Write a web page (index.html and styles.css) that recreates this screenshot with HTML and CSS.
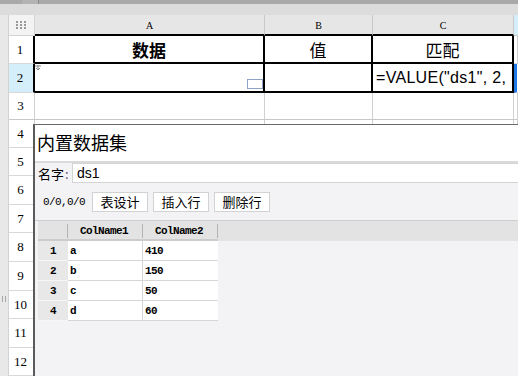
FILE: index.html
```html
<!DOCTYPE html>
<html>
<head>
<meta charset="utf-8">
<link rel="stylesheet" href="styles.css">
</head>
<body>
<div class="app">
  <div class="topbar"><div class="thumb"></div></div>
  <div class="band"></div>
  <div class="sheet">
    <div class="gutter"><span class="grip"></span></div>
    <div class="grid">
      <div class="corner">
        <svg width="10" height="8" viewBox="0 0 10 8"><g fill="#9a9a9a"><rect x="0" y="0" width="2" height="2"/><rect x="4" y="0" width="2" height="2"/><rect x="8" y="0" width="2" height="2"/><rect x="0" y="3" width="2" height="2"/><rect x="4" y="3" width="2" height="2"/><rect x="8" y="3" width="2" height="2"/><rect x="0" y="6" width="2" height="2"/><rect x="4" y="6" width="2" height="2"/><rect x="8" y="6" width="2" height="2"/></g></svg>
      </div>
      <div class="ch blkb">A</div><div class="ch blkb">B</div><div class="ch blkb">C</div><div class="ch sel"></div>

      <div class="rh blkr">1</div>
      <div class="c blk big bold">数据</div><div class="c blk big">值</div><div class="c blk big">匹配</div><div class="c"></div>

      <div class="rh blkr selr">2</div>
      <div class="c blk a2">
        <svg class="mark" width="6" height="6" viewBox="0 0 6 6"><path d="M3 0V5M1 3L3 5L5 3M0 1H6" stroke="#8a8a8a" stroke-width="1" fill="none"/></svg>
        <span class="handle"></span>
      </div>
      <div class="c blk"></div><div class="c blk formula">=VALUE("ds1", 2,</div><div class="c cur"></div>

      <div class="rh r3">3</div><div class="c r3"></div><div class="c r3"></div><div class="c r3"></div><div class="c r3"></div>
      <div class="rh">4</div><div class="c"></div><div class="c"></div><div class="c"></div><div class="c"></div>
      <div class="rh">5</div><div class="c"></div><div class="c"></div><div class="c"></div><div class="c"></div>
      <div class="rh">6</div><div class="c"></div><div class="c"></div><div class="c"></div><div class="c"></div>
      <div class="rh">7</div><div class="c"></div><div class="c"></div><div class="c"></div><div class="c"></div>
      <div class="rh">8</div><div class="c"></div><div class="c"></div><div class="c"></div><div class="c"></div>
      <div class="rh">9</div><div class="c"></div><div class="c"></div><div class="c"></div><div class="c"></div>
      <div class="rh">10</div><div class="c"></div><div class="c"></div><div class="c"></div><div class="c"></div>
      <div class="rh">11</div><div class="c"></div><div class="c"></div><div class="c"></div><div class="c"></div>
      <div class="rh">12</div><div class="c"></div><div class="c"></div><div class="c"></div><div class="c"></div>
    </div>
  </div>

  <div class="dialog">
    <div class="title">内置数据集</div>
    <div class="namerow">
      <span class="label">名字<span class="colon">:</span></span>
      <div class="input">ds1</div>
    </div>
    <div class="toolbar">
      <span class="pos">0/0,0/0</span>
      <button class="btn">表设计</button>
      <button class="btn">插入行</button>
      <button class="btn">删除行</button>
    </div>
    <div class="tablearea">
      <div class="thead">
        <div class="thcols">
          <div class="th"></div>
          <div class="th">ColName1</div>
          <div class="th">ColName2</div>
        </div>
      </div>
      <div class="tbody">
        <div class="num">1</div><div class="td">a</div><div class="td">410</div>
        <div class="num">2</div><div class="td">b</div><div class="td">150</div>
        <div class="num">3</div><div class="td">c</div><div class="td">50</div>
        <div class="num">4</div><div class="td">d</div><div class="td">60</div>
      </div>
    </div>
  </div>
</div>
</body>
</html>
```

FILE: styles.css
```css
* { box-sizing: border-box; }
html, body { margin: 0; padding: 0; }
body {
  width: 518px;
  height: 376px;
  overflow: hidden;
  background: #ffffff;
  font-family: "Noto Sans CJK SC", "Liberation Sans", sans-serif;
  color: #000;
}
.app {
  position: relative;
  width: 518px;
  height: 376px;
  overflow: hidden;
}
.topbar {
  height: 4px;
  background: #a9a9a9;
  display: flex;
}
.thumb {
  margin-left: 22px;
  width: 17px;
  background: #b3b3b3;
  border-right: 1px solid #8a8a8a;
}
.band {
  height: 11px;
  background: #dcdcdc;
}
.sheet {
  display: flex;
  height: 361px;
}
.gutter {
  width: 9px;
  flex: none;
  background: #e8e8e8;
  border-right: 1px solid #d2d2d2;
  padding-top: 281px;
  padding-left: 2px;
}
.grip {
  display: block;
  width: 4px;
  height: 6px;
  border-left: 1px solid #a8a8a8;
  border-right: 1px solid #a8a8a8;
}
.grid {
  flex: 1;
  display: grid;
  grid-template-columns: 26px 230px 108px 141px 1fr;
  grid-template-rows: 21px 28px 29px 27px 28px 28px 29px 28px 29px 29px 28px 29px 28px;
}
.corner {
  background: #f3f3f3;
  border-right: 1px solid #d4d4d4;
  border-bottom: 1px solid #d4d4d4;
  display: flex;
  align-items: center;
  justify-content: center;
  padding-right: 2px;
}
.ch {
  background: #e6e6e6;
  border-right: 1px solid #c9c9c9;
  border-bottom: 1px solid #c9c9c9;
  font-family: "Liberation Serif", serif;
  font-size: 10px;
  display: flex;
  align-items: center;
  justify-content: center;
  padding-top: 1px;
}
.ch.blkb { border-bottom: 2px solid #000; }
.ch.sel { background: #d4eefa; border-right: none; }
.rh {
  background: #fff;
  border-right: 1px solid #d0d0d0;
  border-bottom: 1px solid #d8d8d8;
  font-family: "Liberation Serif", serif;
  font-size: 13px;
  display: flex;
  align-items: center;
  justify-content: center;
  padding-right: 2px;
}
.rh.blkr { border-right: 2px solid #000; }
.rh.selr { background: #d4eefa; }
.c {
  background: #fff;
  border-right: 1px solid #d0d0d0;
  border-bottom: 1px solid #d8d8d8;
  min-width: 0;
  overflow: hidden;
}
.c.blk {
  border-right: 2px solid #000;
  border-bottom: 2px solid #000;
}
.rh.r3, .c.r3 { border-bottom: 1px solid #c8c8c8; }
.big {
  font-size: 17px;
  display: flex;
  align-items: center;
  justify-content: center;
}
.bold { font-weight: 700; }
.a2 {
  display: flex;
  flex-direction: column;
}
.mark {
  display: block;
  margin: 1px 0 0 0;
}
.handle {
  display: block;
  align-self: flex-end;
  margin-top: auto;
  margin-bottom: 2px;
  width: 16px;
  height: 10px;
  border: 1px solid #8fa2c6;
  background: #fff;
}
.formula {
  font-family: "Liberation Sans", sans-serif;
  font-size: 16px;
  letter-spacing: 0.3px;
  white-space: nowrap;
  padding-left: 3px;
  display: flex;
  align-items: center;
}
.cur {
  border-left: 3px solid #1f7ae6;
  border-right: none;
}

/* dialog */
.dialog {
  position: absolute;
  left: 33px;
  top: 124px;
  right: 0;
  bottom: 0;
  border-left: 2px solid #5a5a5a;
  border-top: 1px solid #6a6a6a;
  background: #f3f3f5;
  display: flex;
  flex-direction: column;
}
.title {
  height: 38px;
  flex: none;
  background: #fff;
  border-bottom: 2px solid #dadada;
  font-size: 18px;
  padding-left: 2px;
  display: flex;
  align-items: center;
  padding-bottom: 2px;
}
.namerow {
  height: 20px;
  flex: none;
  display: flex;
  align-items: stretch;
}
.label {
  width: 37px;
  flex: none;
  padding-left: 3px;
  font-size: 13px;
  display: flex;
  align-items: center;
}
.colon { color: #6a4a8a; margin-left: 1px; }
.input {
  flex: 1;
  background: #fff;
  border: 1px solid #d4d4d4;
  border-right: none;
  font-family: "Liberation Sans", sans-serif;
  font-size: 14px;
  padding-left: 4px;
  display: flex;
  align-items: center;
}
.toolbar {
  height: 37px;
  flex: none;
  display: flex;
  align-items: flex-start;
  padding: 9px 0 0 8px;
  gap: 5px;
}
.pos {
  font-family: "Liberation Mono", monospace;
  font-size: 11px;
  letter-spacing: -0.6px;
  height: 20px;
  line-height: 20px;
  margin-right: 2px;
}
.btn {
  height: 20px;
  width: 56px;
  padding: 0;
  margin: 0;
  background: #fff;
  border: 1px solid #d2d2d2;
  font-family: "Noto Sans CJK SC", sans-serif;
  font-size: 13px;
  line-height: 18px;
  color: #000;
}
.tablearea {
  flex: 1;
  border-top: 1px solid #cfcfcf;
  padding-left: 3px;
}
.thead {
  height: 20px;
  background: #e3e3e3;
}
.thcols {
  width: 180px;
  height: 20px;
  display: grid;
  grid-template-columns: 30px 75px 75px;
  border-bottom: 2px solid #cccccc;
  align-items: center;
}
.th {
  height: 14px;
  border-right: 1px solid #b4b4b4;
  font-family: "Liberation Mono", monospace;
  font-size: 11px;
  font-weight: 700;
  letter-spacing: -0.6px;
  line-height: 14px;
  padding-left: 12px;
  margin-top: 1px;
}
.tbody {
  width: 180px;
  display: grid;
  grid-template-columns: 30px 75px 75px;
  grid-auto-rows: 20px;
  border-right: 1px solid #d0d0d0;
}
.num, .td {
  border-bottom: 1px solid #d6d6d6;
  font-family: "Liberation Mono", monospace;
  font-size: 11px;
  font-weight: 700;
  letter-spacing: -0.6px;
  display: flex;
  align-items: center;
}
.num {
  background: #e8e8e8;
  justify-content: center;
  border-bottom-color: #f6f6f6;
}
.td {
  background: #fff;
  border-right: 1px solid #d6d6d6;
  padding-left: 2px;
}
.td:nth-child(3n) { border-right: none; }
```
